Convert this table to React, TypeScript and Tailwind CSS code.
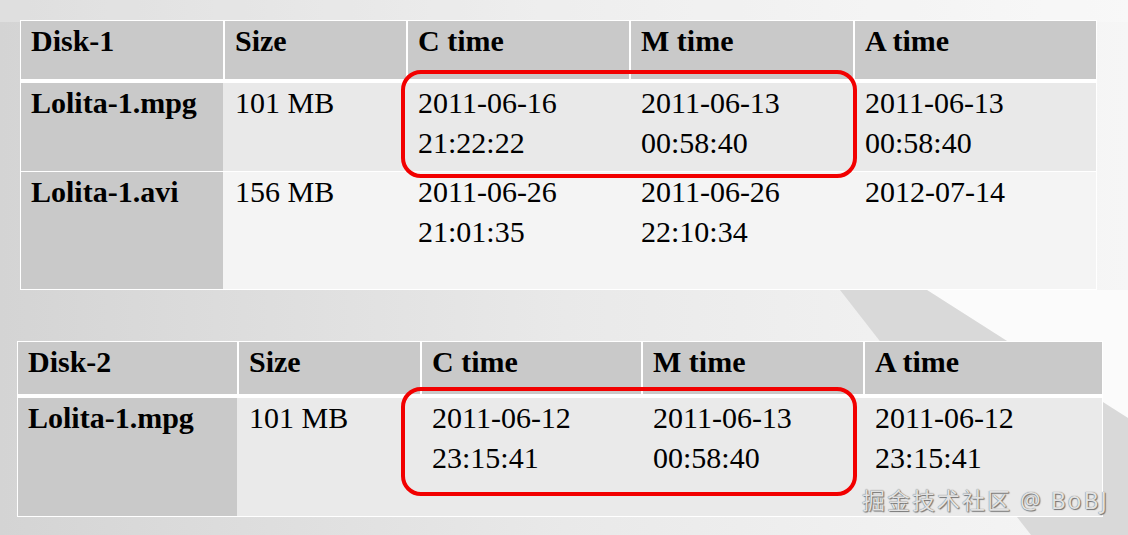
type Row = { name: string; size: string; times: string[][]; tone: string };

type DiskTableProps = {
  title: string;
  cols: string;
  headerH: string;
  rows: Row[];
};

const headers = ["Size", "C time", "M time", "A time"];

const DiskTable = ({ title, cols, headerH, rows }: DiskTableProps) => {
  return (
    <div className="inline-flex flex-col bg-white p-px">
      <div className={`grid gap-x-[2px] ${cols} ${headerH}`}>
        <div className="bg-[#c9c9c9] px-[10px] font-bold">{title}</div>
        {headers.map((h) => (
          <div key={h} className="bg-[#c9c9c9] px-[10px] font-bold">
            {h}
          </div>
        ))}
      </div>
      <div className="mt-[4px] flex flex-col gap-y-px">
        {rows.map((row) => (
          <div key={row.name} className={`grid gap-x-[2px] ${cols} ${row.tone}`}>
            <div className="bg-[#c9c9c9] px-[10px] font-bold">{row.name}</div>
            <div className="px-[10px]">{row.size}</div>
            {row.times.map((t, i) => (
              <div key={i} className="px-[10px]">
                {t.map((line) => (
                  <div key={line}>{line}</div>
                ))}
              </div>
            ))}
          </div>
        ))}
      </div>
    </div>
  );
};

export default function App() {
  return (
    <div className="relative w-[1128px] h-[535px] overflow-hidden bg-gradient-to-r from-[#d4d4d4] via-[#e9e9e9] to-[#f6f6f6] [font-family:'Liberation_Serif',serif] text-[30px] leading-[40px] text-black">
      {/* slide backdrop shapes */}
      <svg className="absolute inset-0" width="1128" height="535" viewBox="0 0 1128 535">
        <rect x="0" y="0" width="1128" height="22" fill="#ffffff" opacity="0.25" />
        <polygon points="927,290 1128,290 1128,418" fill="#fbfbfb" />
        <polygon points="840,290 927,290 1128,418 1128,535 1031,535" fill="#d9d9d9" />
      </svg>

      <div className="relative flex flex-col items-start pt-[20px]">
        <div className="ml-[20px]">
          <DiskTable
            title="Disk-1"
            cols="grid-cols-[202px_181px_221px_222px_241px]"
            headerH="h-[58px]"
            rows={[
              {
                name: "Lolita-1.mpg",
                size: "101 MB",
                tone: "h-[88px] bg-[#e9e9e9]",
                times: [
                  ["2011-06-16", "21:22:22"],
                  ["2011-06-13", "00:58:40"],
                  ["2011-06-13", "00:58:40"],
                ],
              },
              {
                name: "Lolita-1.avi",
                size: "156 MB",
                tone: "h-[117px] bg-[#f4f4f4]",
                times: [
                  ["2011-06-26", "21:01:35"],
                  ["2011-06-26", "22:10:34"],
                  ["2012-07-14"],
                ],
              },
            ]}
          />
        </div>

        <div className="ml-[17px] mt-[51px]">
          <DiskTable
            title="Disk-2"
            cols="grid-cols-[219px_181px_219px_220px_237px]"
            headerH="h-[52px]"
            rows={[
              {
                name: "Lolita-1.mpg",
                size: "101 MB",
                tone: "h-[118px] bg-[#eaeaea]",
                times: [
                  ["2011-06-12", "23:15:41"],
                  ["2011-06-13", "00:58:40"],
                  ["2011-06-12", "23:15:41"],
                ],
              },
            ]}
          />
        </div>
      </div>

      {/* red highlight boxes */}
      <div className="absolute left-[401px] top-[70px] w-[456px] h-[108px] rounded-[20px] border-[4px] border-[#f20000]" />
      <div className="absolute left-[401px] top-[387px] w-[456px] h-[109px] rounded-[20px] border-[4px] border-[#f20000]" />

      {/* watermark */}
      <div className="absolute left-[862px] top-[486px] [font-family:'Noto_Sans','Noto_Sans_CJK_SC',sans-serif] text-[23px] leading-[28px] tracking-[2px] text-[#e2e2e2] [text-shadow:0_0_1px_#555,1px_1px_1px_#777]">
        掘金技术社区 @ BoBJ
      </div>
    </div>
  );
}
